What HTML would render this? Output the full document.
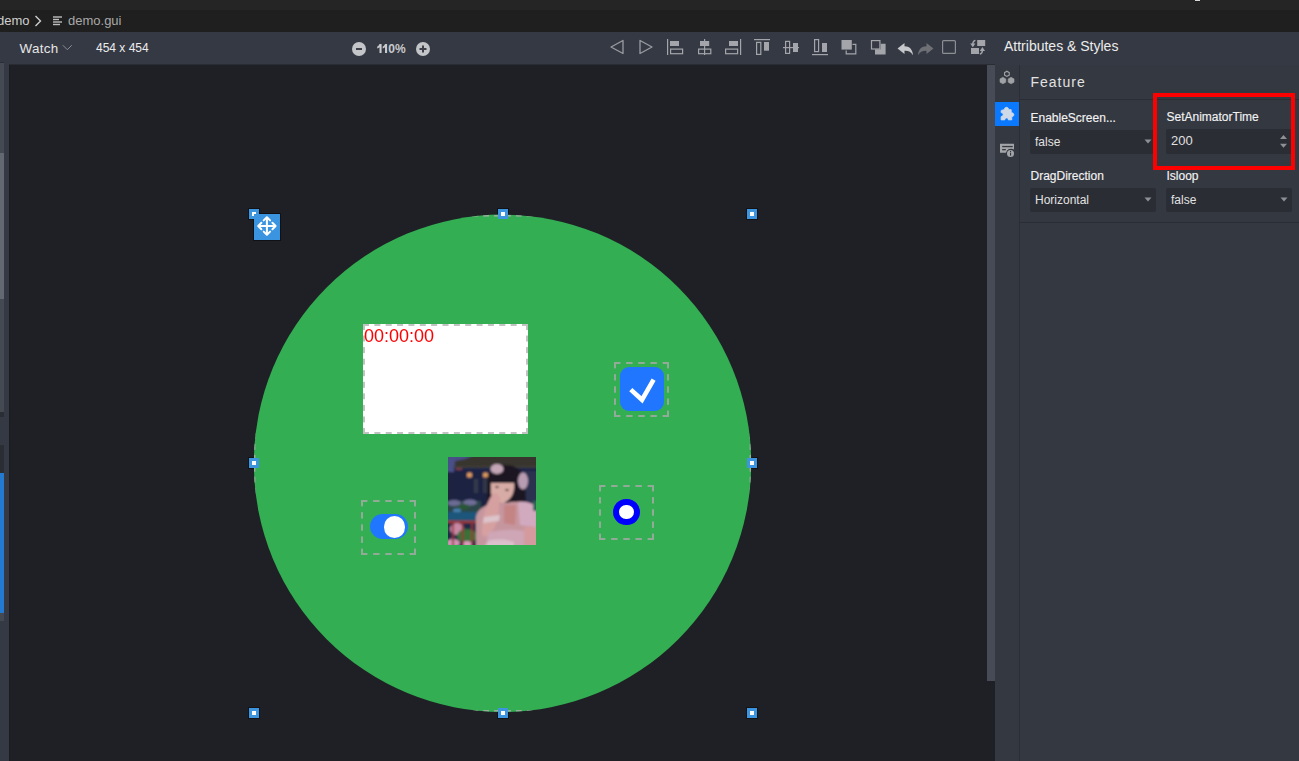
<!DOCTYPE html>
<html><head><meta charset="utf-8">
<style>
*{box-sizing:border-box;margin:0;padding:0}
html,body{width:1299px;height:761px;overflow:hidden;background:#1e2025;font-family:"Liberation Sans",sans-serif}
.a{position:absolute}
#topbar{left:0;top:0;width:1299px;height:10px;background:#252526}
#crumb{left:0;top:10px;width:1299px;height:22px;background:#1f1f1f}
#toolbar{left:0;top:32px;width:1299px;height:33px;background:#353943}
.t{white-space:nowrap;line-height:1}
#leftstrip{left:0;top:65px;width:9px;height:696px;background:#353943}
#canvas{left:9px;top:65px;width:978px;height:696px;background:#1e2025;border-left:1px solid #1a1c20}
#scroll{left:987px;top:65px;width:8px;height:616px;background:#474b55}
#sidebar{left:995px;top:65px;width:24px;height:696px;background:#343841}
#sbdiv{left:1019px;top:65px;width:1px;height:696px;background:#2b2e35}
#panel{left:1020px;top:65px;width:279px;height:696px;background:#343841}
.field{position:absolute;background:#2a2d34;border-radius:2px}
.lbl{position:absolute;font-size:12px;color:#f2f2f2;-webkit-text-stroke:0.15px #f2f2f2;white-space:nowrap;line-height:1}
.val{position:absolute;font-size:12px;color:#e2e2e2;white-space:nowrap;line-height:1}
.dash{position:absolute;border:2px dashed rgba(190,190,190,0.75)}
.handle{position:absolute;width:10px;height:10px;background:#3d95e0}
.handle:after{content:"";position:absolute;left:3px;top:3px;width:4px;height:4px;background:#fff}
</style></head><body>
<div id="topbar" class="a"></div>
<div class="a" style="left:1195px;top:0;width:5px;height:1px;background:#d8d8d8"></div><div class="a" style="left:1195px;top:1px;width:5px;height:1px;background:#1a1a1a;opacity:.5"></div>
<div id="crumb" class="a"></div>
<div class="a t" style="left:-3px;top:14px;font-size:13px;color:#d0d0d0">demo</div>
<svg class="a" style="left:34px;top:15px" width="9" height="12" viewBox="0 0 9 12"><path d="M1.5 1 L6.5 6 L1.5 11" fill="none" stroke="#cfcfcf" stroke-width="1.4"/></svg>
<svg class="a" style="left:53px;top:16px" width="10" height="10" viewBox="0 0 10 10"><g fill="#bdbdbd"><rect x="0" y="0.3" width="9" height="1.4"/><rect x="0" y="2.8" width="6" height="1.4"/><rect x="0" y="5.3" width="9" height="1.4"/><rect x="0" y="7.8" width="7" height="1.4"/></g></svg>
<div class="a t" style="left:68px;top:14px;font-size:13px;color:#a9a9a9">demo.gui</div>

<div id="toolbar" class="a"></div>
<div class="a t" style="left:19.6px;top:42px;font-size:13.4px;letter-spacing:0.3px;color:#e6e6e6">Watch</div>
<svg class="a" style="left:62px;top:44px" width="11" height="8" viewBox="0 0 11 8"><path d="M0.8 1.2 L5.3 5.7 L9.8 1.2" fill="none" stroke="#8a8d93" stroke-width="1"/></svg>
<div class="a t" style="left:96px;top:42px;font-size:12px;color:#ececec">454 x 454</div>
<svg class="a" style="left:352px;top:42px" width="14" height="14" viewBox="0 0 14 14"><circle cx="7" cy="7" r="7" fill="#c3c5c9"/><rect x="4" y="6" width="6" height="2" fill="#3d4049"/></svg>
<svg class="a" style="left:370px;top:40px" width="20" height="16" viewBox="370 40 20 16"><g fill="#c8c9cc">
<path d="M379.5 44 H381.6 V53 H379.5 V47.2 C378.8 47.9 378 48.3 377.2 48.6 V46.6 C378.3 46.1 379.1 45.2 379.5 44 Z"/>
<path d="M385 44 H387.1 V53 H385 V47.2 C384.3 47.9 383.5 48.3 382.7 48.6 V46.6 C383.8 46.1 384.6 45.2 385 44 Z"/>
</g></svg>
<div class="a t" style="left:388.3px;top:43px;font-size:12px;font-weight:700;color:#c8c9cc">0%</div>
<svg class="a" style="left:416px;top:42px" width="14" height="14" viewBox="0 0 14 14"><circle cx="7" cy="7" r="7" fill="#c3c5c9"/><rect x="3.5" y="6" width="7" height="2" fill="#3d4049"/><rect x="6" y="3.5" width="2" height="7" fill="#3d4049"/></svg>

<!-- toolbar icons -->
<svg class="a" style="left:600px;top:34px" width="400" height="28" viewBox="600 34 400 28">
 <g fill="none" stroke="#9a9ca1" stroke-width="1.3" stroke-linejoin="round">
  <path d="M623 40.5 L611 47 L623 53.5 Z"/>
  <path d="M640 40.5 L652 47 L640 53.5 Z"/>
 </g>
 <g fill="#a3a5aa">
  <rect x="667" y="39" width="1.2" height="16"/>
  <rect x="670" y="41" width="9" height="5"/>
  <rect x="704" y="39" width="1.2" height="16"/>
  <rect x="700" y="41" width="9.2" height="5"/>
  <rect x="740" y="39" width="1.2" height="16"/>
  <rect x="729" y="41" width="9" height="5"/>
  <rect x="754" y="39" width="16" height="1.2"/>
  <rect x="764" y="42" width="5" height="8.7"/>
  <rect x="783" y="47" width="16" height="1.2"/>
  <rect x="793" y="43" width="5" height="9"/>
  <rect x="812" y="54" width="16" height="1.2"/>
  <rect x="822" y="43" width="5" height="9"/>
  <rect x="841.5" y="40" width="10.3" height="9.6"/>
  <path d="M875 49.2 H880.6 V43.8 H885.6 V54.6 H875 Z"/>
 </g>
 <g fill="none" stroke="#a3a5aa" stroke-width="1.2">
  <rect x="670.6" y="49.1" width="12" height="4.6"/>
  <rect x="698.6" y="49.1" width="12.2" height="4.6"/>
  <rect x="725.6" y="49.1" width="12" height="4.6"/>
  <rect x="756.6" y="42.4" width="4.2" height="12"/>
  <rect x="785.6" y="41.4" width="4" height="12"/>
  <rect x="814.6" y="39.6" width="4" height="12"/>
  <path d="M852.5 44.4 H855.8 V53.8 H846.2 V50.6"/>
  <rect x="871.5" y="40.6" width="8.4" height="8.4"/>
  <rect x="942.6" y="40.6" width="12.8" height="12.8" rx="1" stroke="#8c8e93"/>
 </g>
 <path d="M897.5 48.5 L904.5 43 V46.2 C909.5 46.2 912.8 49.5 913 55.2 C911 51.8 908.5 50.6 904.5 50.8 V54 Z" fill="#c6c7ca"/>
 <path d="M933.5 48.5 L926.5 43 V46.2 C921.5 46.2 918.2 49.5 918 55.2 C920 51.8 922.5 50.6 926.5 50.8 V54 Z" fill="#6e7076"/>
 <g fill="#a3a5aa">
  <rect x="977.2" y="40" width="8" height="6"/>
  <rect x="971" y="48" width="8" height="6"/>
  <path d="M970.2 43.4 H975.4 L972.8 47.2 Z"/><path d="M975.4 40.4 Q972.8 41.2 972.8 44" fill="none" stroke="#a3a5aa" stroke-width="1.4"/>
  <path d="M979.8 50.9 H985 L982.4 47.1 Z"/><path d="M979.8 54.2 Q982.4 53.4 982.4 50.6" fill="none" stroke="#a3a5aa" stroke-width="1.4"/>
 </g>
</svg>
<div class="a t" style="left:1004px;top:39px;font-size:14px;color:#ececec">Attributes &amp; Styles</div>

<div id="leftstrip" class="a"></div>
<div class="a" style="left:0;top:62px;width:4px;height:1px;background:#2a2d33"></div>
<div class="a" style="left:0;top:63px;width:4px;height:90px;background:#454952"></div>
<div class="a" style="left:0;top:153px;width:4px;height:146px;background:#646871"></div>
<div class="a" style="left:0;top:299px;width:4px;height:113px;background:#454952"></div>
<div class="a" style="left:0;top:412px;width:4px;height:5px;background:#2a2d33"></div>
<div class="a" style="left:0;top:445px;width:4px;height:28px;background:#2a2d34"></div>
<div class="a" style="left:0;top:473px;width:4px;height:140px;background:#2479d0"></div>
<div class="a" style="left:0;top:613px;width:4px;height:8px;background:#454952"></div>

<div id="canvas" class="a"></div>
<div class="a" style="left:9px;top:64px;width:986px;height:1px;background:#292c33"></div>
<div id="scroll" class="a"></div>
<div id="sidebar" class="a"></div>
<div id="sbdiv" class="a"></div>
<div id="panel" class="a"></div>

<!-- sidebar icons -->
<svg class="a" style="left:995px;top:65px" width="24" height="24" viewBox="0 0 24 24">
 <path d="M11.9 5.6 L14.8 7.2 V10.5 L11.9 12.1 L9 10.5 V7.2 Z M11.9 6.9 L10.1 7.9 V9.8 L11.9 10.8 L13.7 9.8 V7.9 Z" fill="#9fa1a5" fill-rule="evenodd"/>
 <path d="M7.9 12.3 L10.8 13.9 V17.2 L7.9 18.8 L5 17.2 V13.9 Z" fill="#9fa1a5" stroke="#9fa1a5" stroke-width="0.6" stroke-linejoin="round"/>
 <path d="M16.1 12.3 L19 13.9 V17.2 L16.1 18.8 L13.2 17.2 V13.9 Z" fill="#9fa1a5" stroke="#9fa1a5" stroke-width="0.6" stroke-linejoin="round"/>
</svg>
<div class="a" style="left:995px;top:102px;width:24px;height:24px;background:#0a78ff"></div>
<svg class="a" style="left:995px;top:102px" width="24" height="24" viewBox="0 0 24 24">
 <path d="M6.2 8.4 L9.4 7.6 C9.1 4.6 13.8 4.4 13.6 7.6 L16.2 7.7 L16.3 10.8 C19.6 10.2 19.6 15.2 16.6 14.6 L16.9 17.8 L13.3 17.9 C13.6 15.2 10 15.2 9.8 17.9 L6.1 17.9 L6.1 14.6 C8.9 14 8.9 11 6.1 10.6 Z" fill="#cfd9e8" stroke="#cfd9e8" stroke-width="0.8" stroke-linejoin="round"/>
</svg>
<svg class="a" style="left:995px;top:138px" width="24" height="24" viewBox="0 0 24 24">
 <path d="M5 5.8 H19 V11.6 A5 5 0 0 0 11.2 14.8 H5 Z" fill="#a3a5a9"/>
 <rect x="7.2" y="7.9" width="10.5" height="1.3" fill="#343841"/>
 <rect x="7.2" y="11" width="3.6" height="1.3" fill="#343841"/>
 <circle cx="15.5" cy="15.5" r="4.4" fill="#343841"/>
 <circle cx="15.5" cy="15.5" r="3.5" fill="#a3a5a9"/>
 <rect x="15" y="14.6" width="1.1" height="3" fill="#343841"/>
 <rect x="15" y="12.9" width="1.1" height="1.1" fill="#343841"/>
</svg>

<!-- panel -->
<div class="a t" style="left:1030.5px;top:75px;font-size:14px;letter-spacing:1px;color:#e2e2e2">Feature</div>
<div class="a" style="left:1020px;top:99px;width:279px;height:1px;background:#2a2d33"></div>
<div class="lbl" style="left:1030.5px;top:112px">EnableScreen...</div>
<div class="field" style="left:1030px;top:130px;width:126px;height:24px"></div>
<div class="val" style="left:1035px;top:136px">false</div>
<svg class="a" style="left:1144px;top:139px" width="8" height="5" viewBox="0 0 8 5"><path d="M0.5 0.5 H7.5 L4 4.5 Z" fill="#8e9095"/></svg>

<div class="lbl" style="left:1166.5px;top:111px">SetAnimatorTime</div>
<div class="field" style="left:1166px;top:129px;width:126px;height:25px"></div>
<div class="val" style="left:1171px;top:134px;font-size:13px;color:#e0e0e0">200</div>
<svg class="a" style="left:1279px;top:134px" width="9" height="15" viewBox="0 0 9 15"><path d="M1 5 L4.5 1 L8 5 Z M1 9.8 H8 L4.5 13.8 Z" fill="#8e9095"/></svg>

<div class="lbl" style="left:1030.5px;top:170px">DragDirection</div>
<div class="field" style="left:1030px;top:188px;width:126px;height:24px"></div>
<div class="val" style="left:1035px;top:194px">Horizontal</div>
<svg class="a" style="left:1144px;top:197px" width="8" height="5" viewBox="0 0 8 5"><path d="M0.5 0.5 H7.5 L4 4.5 Z" fill="#8e9095"/></svg>

<div class="lbl" style="left:1166.5px;top:170px">Isloop</div>
<div class="field" style="left:1166px;top:188px;width:126px;height:24px"></div>
<div class="val" style="left:1171px;top:194px">false</div>
<svg class="a" style="left:1280px;top:197px" width="8" height="5" viewBox="0 0 8 5"><path d="M0.5 0.5 H7.5 L4 4.5 Z" fill="#8e9095"/></svg>
<div class="a" style="left:1020px;top:222px;width:279px;height:1px;background:#2a2d33"></div>

<div class="a" style="left:1153px;top:93px;width:142px;height:77px;border:4.7px solid #ff0000"></div>

<!-- canvas content -->
<div class="a" style="left:248px;top:208px;width:12px;height:12px;background:#121316"></div><div class="a" style="left:497px;top:208px;width:12px;height:12px;background:#121316"></div><div class="a" style="left:746px;top:208px;width:12px;height:12px;background:#121316"></div><div class="a" style="left:248px;top:457px;width:12px;height:12px;background:#121316"></div><div class="a" style="left:746px;top:457px;width:12px;height:12px;background:#121316"></div><div class="a" style="left:248px;top:707px;width:12px;height:12px;background:#121316"></div><div class="a" style="left:497px;top:707px;width:12px;height:12px;background:#121316"></div><div class="a" style="left:746px;top:707px;width:12px;height:12px;background:#121316"></div>
<svg class="a" style="left:250px;top:210px" width="506" height="506" viewBox="250 210 506 506">
 <defs><clipPath id="cc"><circle cx="502.5" cy="463.3" r="248.7"/></clipPath></defs>
 <circle cx="502.5" cy="463.3" r="248.7" fill="#33ae52"/>
 <g clip-path="url(#cc)" fill="rgb(175,175,175)" opacity="0.8"><rect x="253.80" y="215.00" width="6.00" height="1.6"/><rect x="253.80" y="710.00" width="6.00" height="1.6"/><rect x="264.72" y="215.00" width="6.00" height="1.6"/><rect x="264.72" y="710.00" width="6.00" height="1.6"/><rect x="275.64" y="215.00" width="6.00" height="1.6"/><rect x="275.64" y="710.00" width="6.00" height="1.6"/><rect x="286.56" y="215.00" width="6.00" height="1.6"/><rect x="286.56" y="710.00" width="6.00" height="1.6"/><rect x="297.48" y="215.00" width="6.00" height="1.6"/><rect x="297.48" y="710.00" width="6.00" height="1.6"/><rect x="308.40" y="215.00" width="6.00" height="1.6"/><rect x="308.40" y="710.00" width="6.00" height="1.6"/><rect x="319.32" y="215.00" width="6.00" height="1.6"/><rect x="319.32" y="710.00" width="6.00" height="1.6"/><rect x="330.24" y="215.00" width="6.00" height="1.6"/><rect x="330.24" y="710.00" width="6.00" height="1.6"/><rect x="341.16" y="215.00" width="6.00" height="1.6"/><rect x="341.16" y="710.00" width="6.00" height="1.6"/><rect x="352.08" y="215.00" width="6.00" height="1.6"/><rect x="352.08" y="710.00" width="6.00" height="1.6"/><rect x="363.00" y="215.00" width="6.00" height="1.6"/><rect x="363.00" y="710.00" width="6.00" height="1.6"/><rect x="373.92" y="215.00" width="6.00" height="1.6"/><rect x="373.92" y="710.00" width="6.00" height="1.6"/><rect x="384.84" y="215.00" width="6.00" height="1.6"/><rect x="384.84" y="710.00" width="6.00" height="1.6"/><rect x="395.76" y="215.00" width="6.00" height="1.6"/><rect x="395.76" y="710.00" width="6.00" height="1.6"/><rect x="406.68" y="215.00" width="6.00" height="1.6"/><rect x="406.68" y="710.00" width="6.00" height="1.6"/><rect x="417.60" y="215.00" width="6.00" height="1.6"/><rect x="417.60" y="710.00" width="6.00" height="1.6"/><rect x="428.52" y="215.00" width="6.00" height="1.6"/><rect x="428.52" y="710.00" width="6.00" height="1.6"/><rect x="439.44" y="215.00" width="6.00" height="1.6"/><rect x="439.44" y="710.00" width="6.00" height="1.6"/><rect x="450.36" y="215.00" width="6.00" height="1.6"/><rect x="450.36" y="710.00" width="6.00" height="1.6"/><rect x="461.28" y="215.00" width="6.00" height="1.6"/><rect x="461.28" y="710.00" width="6.00" height="1.6"/><rect x="472.20" y="215.00" width="6.00" height="1.6"/><rect x="472.20" y="710.00" width="6.00" height="1.6"/><rect x="483.12" y="215.00" width="6.00" height="1.6"/><rect x="483.12" y="710.00" width="6.00" height="1.6"/><rect x="494.04" y="215.00" width="6.00" height="1.6"/><rect x="494.04" y="710.00" width="6.00" height="1.6"/><rect x="504.96" y="215.00" width="6.00" height="1.6"/><rect x="504.96" y="710.00" width="6.00" height="1.6"/><rect x="515.88" y="215.00" width="6.00" height="1.6"/><rect x="515.88" y="710.00" width="6.00" height="1.6"/><rect x="526.80" y="215.00" width="6.00" height="1.6"/><rect x="526.80" y="710.00" width="6.00" height="1.6"/><rect x="537.72" y="215.00" width="6.00" height="1.6"/><rect x="537.72" y="710.00" width="6.00" height="1.6"/><rect x="548.64" y="215.00" width="6.00" height="1.6"/><rect x="548.64" y="710.00" width="6.00" height="1.6"/><rect x="559.56" y="215.00" width="6.00" height="1.6"/><rect x="559.56" y="710.00" width="6.00" height="1.6"/><rect x="570.48" y="215.00" width="6.00" height="1.6"/><rect x="570.48" y="710.00" width="6.00" height="1.6"/><rect x="581.40" y="215.00" width="6.00" height="1.6"/><rect x="581.40" y="710.00" width="6.00" height="1.6"/><rect x="592.32" y="215.00" width="6.00" height="1.6"/><rect x="592.32" y="710.00" width="6.00" height="1.6"/><rect x="603.24" y="215.00" width="6.00" height="1.6"/><rect x="603.24" y="710.00" width="6.00" height="1.6"/><rect x="614.16" y="215.00" width="6.00" height="1.6"/><rect x="614.16" y="710.00" width="6.00" height="1.6"/><rect x="625.08" y="215.00" width="6.00" height="1.6"/><rect x="625.08" y="710.00" width="6.00" height="1.6"/><rect x="636.00" y="215.00" width="6.00" height="1.6"/><rect x="636.00" y="710.00" width="6.00" height="1.6"/><rect x="646.92" y="215.00" width="6.00" height="1.6"/><rect x="646.92" y="710.00" width="6.00" height="1.6"/><rect x="657.84" y="215.00" width="6.00" height="1.6"/><rect x="657.84" y="710.00" width="6.00" height="1.6"/><rect x="668.76" y="215.00" width="6.00" height="1.6"/><rect x="668.76" y="710.00" width="6.00" height="1.6"/><rect x="679.68" y="215.00" width="6.00" height="1.6"/><rect x="679.68" y="710.00" width="6.00" height="1.6"/><rect x="690.60" y="215.00" width="6.00" height="1.6"/><rect x="690.60" y="710.00" width="6.00" height="1.6"/><rect x="701.52" y="215.00" width="6.00" height="1.6"/><rect x="701.52" y="710.00" width="6.00" height="1.6"/><rect x="712.44" y="215.00" width="6.00" height="1.6"/><rect x="712.44" y="710.00" width="6.00" height="1.6"/><rect x="723.36" y="215.00" width="6.00" height="1.6"/><rect x="723.36" y="710.00" width="6.00" height="1.6"/><rect x="734.28" y="215.00" width="6.00" height="1.6"/><rect x="734.28" y="710.00" width="6.00" height="1.6"/><rect x="745.20" y="215.00" width="6.00" height="1.6"/><rect x="745.20" y="710.00" width="6.00" height="1.6"/><rect x="253.80" y="214.60" width="1.6" height="6.00"/><rect x="749.60" y="214.60" width="1.6" height="6.00"/><rect x="253.80" y="225.52" width="1.6" height="6.00"/><rect x="749.60" y="225.52" width="1.6" height="6.00"/><rect x="253.80" y="236.44" width="1.6" height="6.00"/><rect x="749.60" y="236.44" width="1.6" height="6.00"/><rect x="253.80" y="247.36" width="1.6" height="6.00"/><rect x="749.60" y="247.36" width="1.6" height="6.00"/><rect x="253.80" y="258.28" width="1.6" height="6.00"/><rect x="749.60" y="258.28" width="1.6" height="6.00"/><rect x="253.80" y="269.20" width="1.6" height="6.00"/><rect x="749.60" y="269.20" width="1.6" height="6.00"/><rect x="253.80" y="280.12" width="1.6" height="6.00"/><rect x="749.60" y="280.12" width="1.6" height="6.00"/><rect x="253.80" y="291.04" width="1.6" height="6.00"/><rect x="749.60" y="291.04" width="1.6" height="6.00"/><rect x="253.80" y="301.96" width="1.6" height="6.00"/><rect x="749.60" y="301.96" width="1.6" height="6.00"/><rect x="253.80" y="312.88" width="1.6" height="6.00"/><rect x="749.60" y="312.88" width="1.6" height="6.00"/><rect x="253.80" y="323.80" width="1.6" height="6.00"/><rect x="749.60" y="323.80" width="1.6" height="6.00"/><rect x="253.80" y="334.72" width="1.6" height="6.00"/><rect x="749.60" y="334.72" width="1.6" height="6.00"/><rect x="253.80" y="345.64" width="1.6" height="6.00"/><rect x="749.60" y="345.64" width="1.6" height="6.00"/><rect x="253.80" y="356.56" width="1.6" height="6.00"/><rect x="749.60" y="356.56" width="1.6" height="6.00"/><rect x="253.80" y="367.48" width="1.6" height="6.00"/><rect x="749.60" y="367.48" width="1.6" height="6.00"/><rect x="253.80" y="378.40" width="1.6" height="6.00"/><rect x="749.60" y="378.40" width="1.6" height="6.00"/><rect x="253.80" y="389.32" width="1.6" height="6.00"/><rect x="749.60" y="389.32" width="1.6" height="6.00"/><rect x="253.80" y="400.24" width="1.6" height="6.00"/><rect x="749.60" y="400.24" width="1.6" height="6.00"/><rect x="253.80" y="411.16" width="1.6" height="6.00"/><rect x="749.60" y="411.16" width="1.6" height="6.00"/><rect x="253.80" y="422.08" width="1.6" height="6.00"/><rect x="749.60" y="422.08" width="1.6" height="6.00"/><rect x="253.80" y="433.00" width="1.6" height="6.00"/><rect x="749.60" y="433.00" width="1.6" height="6.00"/><rect x="253.80" y="443.92" width="1.6" height="6.00"/><rect x="749.60" y="443.92" width="1.6" height="6.00"/><rect x="253.80" y="454.84" width="1.6" height="6.00"/><rect x="749.60" y="454.84" width="1.6" height="6.00"/><rect x="253.80" y="465.76" width="1.6" height="6.00"/><rect x="749.60" y="465.76" width="1.6" height="6.00"/><rect x="253.80" y="476.68" width="1.6" height="6.00"/><rect x="749.60" y="476.68" width="1.6" height="6.00"/><rect x="253.80" y="487.60" width="1.6" height="6.00"/><rect x="749.60" y="487.60" width="1.6" height="6.00"/><rect x="253.80" y="498.52" width="1.6" height="6.00"/><rect x="749.60" y="498.52" width="1.6" height="6.00"/><rect x="253.80" y="509.44" width="1.6" height="6.00"/><rect x="749.60" y="509.44" width="1.6" height="6.00"/><rect x="253.80" y="520.36" width="1.6" height="6.00"/><rect x="749.60" y="520.36" width="1.6" height="6.00"/><rect x="253.80" y="531.28" width="1.6" height="6.00"/><rect x="749.60" y="531.28" width="1.6" height="6.00"/><rect x="253.80" y="542.20" width="1.6" height="6.00"/><rect x="749.60" y="542.20" width="1.6" height="6.00"/><rect x="253.80" y="553.12" width="1.6" height="6.00"/><rect x="749.60" y="553.12" width="1.6" height="6.00"/><rect x="253.80" y="564.04" width="1.6" height="6.00"/><rect x="749.60" y="564.04" width="1.6" height="6.00"/><rect x="253.80" y="574.96" width="1.6" height="6.00"/><rect x="749.60" y="574.96" width="1.6" height="6.00"/><rect x="253.80" y="585.88" width="1.6" height="6.00"/><rect x="749.60" y="585.88" width="1.6" height="6.00"/><rect x="253.80" y="596.80" width="1.6" height="6.00"/><rect x="749.60" y="596.80" width="1.6" height="6.00"/><rect x="253.80" y="607.72" width="1.6" height="6.00"/><rect x="749.60" y="607.72" width="1.6" height="6.00"/><rect x="253.80" y="618.64" width="1.6" height="6.00"/><rect x="749.60" y="618.64" width="1.6" height="6.00"/><rect x="253.80" y="629.56" width="1.6" height="6.00"/><rect x="749.60" y="629.56" width="1.6" height="6.00"/><rect x="253.80" y="640.48" width="1.6" height="6.00"/><rect x="749.60" y="640.48" width="1.6" height="6.00"/><rect x="253.80" y="651.40" width="1.6" height="6.00"/><rect x="749.60" y="651.40" width="1.6" height="6.00"/><rect x="253.80" y="662.32" width="1.6" height="6.00"/><rect x="749.60" y="662.32" width="1.6" height="6.00"/><rect x="253.80" y="673.24" width="1.6" height="6.00"/><rect x="749.60" y="673.24" width="1.6" height="6.00"/><rect x="253.80" y="684.16" width="1.6" height="6.00"/><rect x="749.60" y="684.16" width="1.6" height="6.00"/><rect x="253.80" y="695.08" width="1.6" height="6.00"/><rect x="749.60" y="695.08" width="1.6" height="6.00"/><rect x="253.80" y="706.00" width="1.6" height="6.00"/><rect x="749.60" y="706.00" width="1.6" height="6.00"/></g>
</svg>

<div class="a" style="left:363px;top:324px;width:165px;height:110px;background:#fff"></div><svg class="a" style="left:363px;top:324px" width="165" height="110" viewBox="0 0 165 110"><g fill="rgb(194,194,194)" opacity="1.0"><rect x="0.00" y="0" width="6.00" height="2"/><rect x="0.00" y="108" width="6.00" height="2"/><rect x="11.36" y="0" width="6.00" height="2"/><rect x="11.36" y="108" width="6.00" height="2"/><rect x="22.71" y="0" width="6.00" height="2"/><rect x="22.71" y="108" width="6.00" height="2"/><rect x="34.07" y="0" width="6.00" height="2"/><rect x="34.07" y="108" width="6.00" height="2"/><rect x="45.43" y="0" width="6.00" height="2"/><rect x="45.43" y="108" width="6.00" height="2"/><rect x="56.79" y="0" width="6.00" height="2"/><rect x="56.79" y="108" width="6.00" height="2"/><rect x="68.14" y="0" width="6.00" height="2"/><rect x="68.14" y="108" width="6.00" height="2"/><rect x="79.50" y="0" width="6.00" height="2"/><rect x="79.50" y="108" width="6.00" height="2"/><rect x="90.86" y="0" width="6.00" height="2"/><rect x="90.86" y="108" width="6.00" height="2"/><rect x="102.21" y="0" width="6.00" height="2"/><rect x="102.21" y="108" width="6.00" height="2"/><rect x="113.57" y="0" width="6.00" height="2"/><rect x="113.57" y="108" width="6.00" height="2"/><rect x="124.93" y="0" width="6.00" height="2"/><rect x="124.93" y="108" width="6.00" height="2"/><rect x="136.29" y="0" width="6.00" height="2"/><rect x="136.29" y="108" width="6.00" height="2"/><rect x="147.64" y="0" width="6.00" height="2"/><rect x="147.64" y="108" width="6.00" height="2"/><rect x="159.00" y="0" width="6.00" height="2"/><rect x="159.00" y="108" width="6.00" height="2"/><rect x="0" y="0.00" width="2" height="6.00"/><rect x="163" y="0.00" width="2" height="6.00"/><rect x="0" y="11.56" width="2" height="6.00"/><rect x="163" y="11.56" width="2" height="6.00"/><rect x="0" y="23.11" width="2" height="6.00"/><rect x="163" y="23.11" width="2" height="6.00"/><rect x="0" y="34.67" width="2" height="6.00"/><rect x="163" y="34.67" width="2" height="6.00"/><rect x="0" y="46.22" width="2" height="6.00"/><rect x="163" y="46.22" width="2" height="6.00"/><rect x="0" y="57.78" width="2" height="6.00"/><rect x="163" y="57.78" width="2" height="6.00"/><rect x="0" y="69.33" width="2" height="6.00"/><rect x="163" y="69.33" width="2" height="6.00"/><rect x="0" y="80.89" width="2" height="6.00"/><rect x="163" y="80.89" width="2" height="6.00"/><rect x="0" y="92.44" width="2" height="6.00"/><rect x="163" y="92.44" width="2" height="6.00"/><rect x="0" y="104.00" width="2" height="6.00"/><rect x="163" y="104.00" width="2" height="6.00"/></g></svg>
<div class="a t" style="left:364px;top:326px;font-size:18px;color:#ff0000;transform:scaleY(1.07);transform-origin:0 0">00:00:00</div>

<svg class="a" style="left:614px;top:362px" width="55" height="55" viewBox="0 0 55 55"><g fill="rgb(170,170,170)" opacity="0.8"><rect x="0.00" y="0" width="6.40" height="2"/><rect x="0.00" y="53" width="6.40" height="2"/><rect x="12.15" y="0" width="6.40" height="2"/><rect x="12.15" y="53" width="6.40" height="2"/><rect x="24.30" y="0" width="6.40" height="2"/><rect x="24.30" y="53" width="6.40" height="2"/><rect x="36.45" y="0" width="6.40" height="2"/><rect x="36.45" y="53" width="6.40" height="2"/><rect x="48.60" y="0" width="6.40" height="2"/><rect x="48.60" y="53" width="6.40" height="2"/><rect x="0" y="0.00" width="2" height="6.40"/><rect x="53" y="0.00" width="2" height="6.40"/><rect x="0" y="12.15" width="2" height="6.40"/><rect x="53" y="12.15" width="2" height="6.40"/><rect x="0" y="24.30" width="2" height="6.40"/><rect x="53" y="24.30" width="2" height="6.40"/><rect x="0" y="36.45" width="2" height="6.40"/><rect x="53" y="36.45" width="2" height="6.40"/><rect x="0" y="48.60" width="2" height="6.40"/><rect x="53" y="48.60" width="2" height="6.40"/></g></svg>
<div class="a" style="left:620px;top:367px;width:44px;height:44px;border-radius:9px;background:#2176ff"></div>
<svg class="a" style="left:620px;top:367px" width="44" height="44" viewBox="0 0 44 44"><path d="M10.8 22.6 L22 32.8 L33.6 12.6" fill="none" stroke="#fff" stroke-width="4.6"/></svg>

<svg class="a" style="left:361px;top:500px" width="55" height="55" viewBox="0 0 55 55"><g fill="rgb(170,170,170)" opacity="0.8"><rect x="0.00" y="0" width="6.40" height="2"/><rect x="0.00" y="53" width="6.40" height="2"/><rect x="12.15" y="0" width="6.40" height="2"/><rect x="12.15" y="53" width="6.40" height="2"/><rect x="24.30" y="0" width="6.40" height="2"/><rect x="24.30" y="53" width="6.40" height="2"/><rect x="36.45" y="0" width="6.40" height="2"/><rect x="36.45" y="53" width="6.40" height="2"/><rect x="48.60" y="0" width="6.40" height="2"/><rect x="48.60" y="53" width="6.40" height="2"/><rect x="0" y="0.00" width="2" height="6.40"/><rect x="53" y="0.00" width="2" height="6.40"/><rect x="0" y="12.15" width="2" height="6.40"/><rect x="53" y="12.15" width="2" height="6.40"/><rect x="0" y="24.30" width="2" height="6.40"/><rect x="53" y="24.30" width="2" height="6.40"/><rect x="0" y="36.45" width="2" height="6.40"/><rect x="53" y="36.45" width="2" height="6.40"/><rect x="0" y="48.60" width="2" height="6.40"/><rect x="53" y="48.60" width="2" height="6.40"/></g></svg>
<div class="a" style="left:370px;top:514px;width:38px;height:25px;border-radius:13px;background:#2176ff"></div>
<div class="a" style="left:383.5px;top:516.3px;width:21.8px;height:21.8px;border-radius:50%;background:#fff"></div>

<svg class="a" style="left:599px;top:485px" width="55" height="55" viewBox="0 0 55 55"><g fill="rgb(170,170,170)" opacity="0.8"><rect x="0.00" y="0" width="6.40" height="2"/><rect x="0.00" y="53" width="6.40" height="2"/><rect x="12.15" y="0" width="6.40" height="2"/><rect x="12.15" y="53" width="6.40" height="2"/><rect x="24.30" y="0" width="6.40" height="2"/><rect x="24.30" y="53" width="6.40" height="2"/><rect x="36.45" y="0" width="6.40" height="2"/><rect x="36.45" y="53" width="6.40" height="2"/><rect x="48.60" y="0" width="6.40" height="2"/><rect x="48.60" y="53" width="6.40" height="2"/><rect x="0" y="0.00" width="2" height="6.40"/><rect x="53" y="0.00" width="2" height="6.40"/><rect x="0" y="12.15" width="2" height="6.40"/><rect x="53" y="12.15" width="2" height="6.40"/><rect x="0" y="24.30" width="2" height="6.40"/><rect x="53" y="24.30" width="2" height="6.40"/><rect x="0" y="36.45" width="2" height="6.40"/><rect x="53" y="36.45" width="2" height="6.40"/><rect x="0" y="48.60" width="2" height="6.40"/><rect x="53" y="48.60" width="2" height="6.40"/></g></svg>
<div class="a" style="left:613.3px;top:498.8px;width:26.4px;height:26.4px;border-radius:50%;background:#fff;border:6px solid #0000ff"></div>

<svg id="photo" class="a" style="left:448px;top:457px" width="88" height="88" viewBox="0 0 88 88">
 <defs><filter id="bl" x="-10%" y="-10%" width="120%" height="120%"><feGaussianBlur stdDeviation="1.0"/></filter>
 <clipPath id="pc"><rect width="88" height="88"/></clipPath></defs>
 <g clip-path="url(#pc)"><g filter="url(#bl)">
  <rect x="-3" y="-3" width="94" height="94" fill="#1c2440"/>
  <path d="M-3 -3 H91 V11 H-3 Z" fill="#38352e"/>
  <path d="M-3 -3 H26 C22 1 14 3 7 4 L6 15 H-3 Z" fill="#4a5088"/>
  <rect x="6" y="9" width="85" height="2" fill="#3c3c3a"/>
  <rect x="6" y="11" width="85" height="3" fill="#1c2448"/>
  <rect x="6" y="14" width="85" height="32" fill="#1b2342"/>
  <rect x="68" y="14" width="23" height="32" fill="#2c3250"/>
  <rect x="26" y="22" width="4" height="14" fill="#343a4c"/>
  <rect x="35" y="22" width="5" height="14" fill="#32384a"/>
  <rect x="8" y="11" width="6" height="2" fill="#7a3a44"/>
  <rect x="19" y="15.5" width="5" height="5" rx="1.5" fill="#dc9a62"/>
  <rect x="35" y="15.5" width="5" height="5" rx="1.5" fill="#d8965e"/>
  <rect x="-3" y="44" width="36" height="11" fill="#2c4648"/>
  <ellipse cx="6" cy="46" rx="7" ry="3" fill="#6c6c94"/>
  <ellipse cx="22" cy="45.5" rx="7" ry="3" fill="#706e98"/>
  <ellipse cx="16" cy="50" rx="6" ry="3" fill="#2a5638"/>
  <ellipse cx="9" cy="53.5" rx="4" ry="2" fill="#4680b0"/>
  <rect x="-3" y="55" width="34" height="9" fill="#1d567a"/>
  <rect x="-3" y="64" width="34" height="26" fill="#1c2a46"/>
  <ellipse cx="9" cy="72" rx="7" ry="6" fill="#c888a4"/>
  <ellipse cx="19" cy="79" rx="10" ry="7" fill="#3a7038"/>
  <ellipse cx="5" cy="86" rx="7" ry="4" fill="#d294b4"/>
  <ellipse cx="19" cy="87" rx="5" ry="3" fill="#d89cbc"/>
  <rect x="-3" y="63.6" width="33" height="2.4" fill="#a0383a"/>
  <rect x="4.2" y="64" width="1.8" height="26" fill="#943434"/>
  <rect x="13.8" y="64" width="1.8" height="26" fill="#943434"/>
  <rect x="23.2" y="64" width="1.8" height="26" fill="#943434"/>
  <path d="M39 46 V24 C40 12 50 8 58 8 C68 8 76 14 77 24 L78 46 Z" fill="#1f1822"/>
  <path d="M43 26 H66 C67 34 64 42 56 46 C50 47 44 43 43 36 Z" fill="#d8aca6"/>
  <ellipse cx="49" cy="30" rx="1.8" ry="1.1" fill="#3a2428"/>
  <ellipse cx="59" cy="33" rx="1.8" ry="1.1" fill="#3a2428"/>
  <ellipse cx="50" cy="42" rx="2.2" ry="1.1" fill="#b84444"/>
  <ellipse cx="49" cy="12" rx="6.5" ry="5" fill="#c4a6b6"/>
  <ellipse cx="75" cy="24" rx="5" ry="8.5" fill="#b89cb2"/>
  <path d="M28 90 V60 C30 50 40 46 56 46 C70 44 82 44 91 50 V90 Z" fill="#c6969e"/>
  <path d="M56 48 H68 L67 68 L56 66 Z" fill="#c48484"/>
  <path d="M70 45 C78 44 86 46 88 52 V70 L72 68 Z" fill="#d2aac0"/>
  <path d="M76 70 H91 V91 H74 Z" fill="#d49a9e"/>
  <path d="M34 78 C33 64 38 46 44 38 C47 34 52 37 52 43 L50 60 C48 70 43 78 37 80 Z" fill="#d6a0a0"/>
  <path d="M36 60 L52 58 L51 64 L35 66 Z" fill="#dcc4cc"/>
  <path d="M40 76 C52 72 66 72 76 74 V91 H38 Z" fill="#cea6b6"/>
  <path d="M40 84 C48 82 58 82 66 85 V91 H36 Z" fill="#dcc0cc"/>
  <rect x="85" y="44" width="6" height="10" fill="#2a6658"/>
 </g></g>
</svg>

<div class="a" style="left:253px;top:213px;width:28px;height:28px;background:rgba(0,0,0,0.45)"></div>
<div class="handle" style="left:249px;top:209px"></div>
<div class="handle" style="left:498px;top:209px"></div>
<div class="handle" style="left:747px;top:209px"></div>
<div class="handle" style="left:249px;top:458px"></div>
<div class="handle" style="left:747px;top:458px"></div>
<div class="handle" style="left:249px;top:708px"></div>
<div class="handle" style="left:498px;top:708px"></div>
<div class="handle" style="left:747px;top:708px"></div>
<div class="a" style="left:254px;top:214px;width:26px;height:26px;background:#3b94e0"></div>
<svg class="a" style="left:254px;top:214px" width="26" height="26" viewBox="0 0 26 26">
 <g fill="none" stroke="#fff" stroke-width="2" stroke-linejoin="round" stroke-linecap="round">
  <path d="M12.9 4 V20 M5 12 H20.8"/>
  <path d="M9.7 6.4 L12.9 3.2 L16.1 6.4 M9.7 17.6 L12.9 20.8 L16.1 17.6 M7.4 8.8 L4.2 12 L7.4 15.2 M18.4 8.8 L21.6 12 L18.4 15.2"/>
 </g>
</svg>
</body></html>
